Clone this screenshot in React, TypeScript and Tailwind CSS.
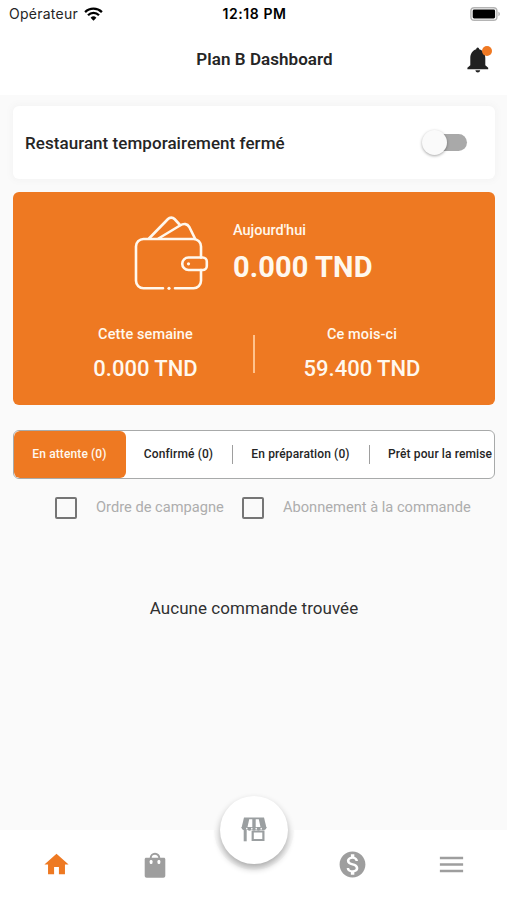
import React from "react";
import { MdHome, MdMonetizationOn, MdMenu } from "react-icons/md";

function WifiIcon() {
  return (
    <svg width="19" height="14" viewBox="0 0 19 14" fill="none" stroke="#000" strokeWidth="2.3">
      <path d="M1.1 5.1a12 12 0 0 1 16.8 0" />
      <path d="M4 8.2a7.8 7.8 0 0 1 11 0" />
      <path d="M9.5 13.7 6.6 10.8a4.1 4.1 0 0 1 5.8 0z" fill="#000" stroke="none" />
    </svg>
  );
}

function BatteryIcon() {
  return (
    <svg width="30" height="14" viewBox="0 0 30 14">
      <rect x="0.9" y="0.7" width="26" height="12.6" rx="3.4" fill="#fff" stroke="#b4b4b4" strokeWidth="1.4" />
      <rect x="2.7" y="2.5" width="22.4" height="9" rx="1.4" fill="#000" />
      <path d="M28.4 4.8c2 .7 2 3.7 0 4.4z" fill="#b4b4b4" />
    </svg>
  );
}

function BellIcon() {
  return (
    <svg width="22" height="26" viewBox="0 0 22 26" fill="#212121">
      <path d="M10.7 0.500c-.9 0-1.300.7-1.500 1.800C5.500 3.500 3.300 6.800 3.300 11v7.300L.4 20.800v1.400h20.800v-1.400l-2.900-2.500V11c0-4.200-2.200-7.500-6.100-8.700-.2-1.100-.6-1.800-1.500-1.800z" />
      <path d="M8.400 23.300h4.800c-.3 1.500-1.200 2.200-2.400 2.200s-2.100-.7-2.400-2.200z" />
    </svg>
  );
}

function WalletIcon() {
  return (
    <svg width="76" height="76" viewBox="0 0 76 76" fill="none" stroke="#fff8ee" strokeWidth="2.600" strokeLinecap="round" strokeLinejoin="round">
      <path d="M29 73.300H9.500a7.500 7.500 0 0 1-7.500-7.500V31.500A7.500 7.500 0 0 1 9.500 24h50a7.500 7.500 0 0 1 7.500 7.500v11" />
      <path d="M67 55v10.800a7.500 7.500 0 0 1-7.500 7.500H41" />
      <path d="M15 23.500 34 4a4.500 4.500 0 0 1 6.500 0L46 10" />
      <path d="M24.500 23.500 46 10.500c3.800-2.300 7.300-1.900 9.300 1.500L61 23.500" />
      <path d="M54.500 42.500h14.300a4 4 0 0 1 4 4v4.500a4 4 0 0 1-4 4H54.500a6.250 6.250 0 0 1 0-12.500z" />
      <circle cx="54.500" cy="48.800" r="1.600" fill="#fff8ee" stroke="none" />
      <circle cx="35" cy="73.300" r="1.600" fill="#fff8ee" stroke="none" />
    </svg>
  );
}

function StoreIcon() {
  return (
    <svg width="26" height="25" viewBox="0 0 26 25">
      <path d="M3 .5h20l2.500 10.500H.5z" fill="#9b9fa1" />
      <path d="M8.200 2.300h3.100V10H6.500zM14.700 2.300h3.100l1.700 7.700h-4.800z" fill="#fff" />
      <path d="M.5 10h25c.2 3.500-4.300 4-5.400 2.300-1.100 1.800-4.400 1.800-5 0-.8 1.800-3.400 1.800-4.200 0-.8 1.800-4 1.800-5 0C4.500 14 .3 13.500.5 10z" fill="#9b9fa1" />
      <path d="M4.200 12v12.300" fill="none" stroke="#9b9fa1" strokeWidth="3" />
      <path d="M11.700 14.500h10.700v8.500H11.700z" fill="none" stroke="#9b9fa1" strokeWidth="2.200" />
      <g fill="#fff">
        <circle cx="5.800" cy="11.600" r=".8" />
        <circle cx="10.800" cy="11.600" r=".8" />
        <circle cx="15.200" cy="11.600" r=".8" />
        <circle cx="20.200" cy="11.600" r=".8" />
      </g>
    </svg>
  );
}

function BagIcon() {
  return (
    <svg width="22" height="26" viewBox="0 0 22 26">
      <path d="M6.700 7.500V6a4.300 4.300 0 0 1 8.600 0v1.500" fill="none" stroke="#9e9e9e" strokeWidth="2" />
      <path d="M2.300 5.700h17.400c1.100 0 1.600.6 1.600 1.600v16.400c0 1.300-.8 2-2 2H2.700c-1.200 0-2-.7-2-2V7.300c0-1 .5-1.600 1.600-1.600z" fill="#9e9e9e" />
      <rect x="5.700" y="8" width="2.800" height="4" rx="1.200" fill="#fff" />
      <rect x="13.500" y="8" width="2.800" height="4" rx="1.200" fill="#fff" />
    </svg>
  );
}

function Checkbox() {
  return <span className="h-[22px] w-[22px] shrink-0 rounded-[2px] border-2 border-[#757575]" />;
}

export default function App() {
  return (
    <div className="flex h-[900px] w-[507px] flex-col overflow-hidden bg-[#fafafa] font-['Roboto',sans-serif] text-[#252525]">
      <header className="h-[95px] shrink-0 bg-white">
        <div className="grid h-[27px] grid-cols-3 items-center pl-[9px] pr-[7px] text-black">
          <div className="flex items-center gap-[6px] font-['Inter',sans-serif] text-[14px] tracking-[0.25px] text-[#252525]">
            <span>Opérateur</span>
            <WifiIcon />
          </div>
          <span className="text-center font-['Inter',sans-serif] text-[14px] font-semibold leading-5 tracking-[0.55px]">12:18 PM</span>
          <div className="flex justify-end"><BatteryIcon /></div>
        </div>
        <div className="grid h-[66px] grid-cols-[40px_1fr_40px] items-center pl-[18px] pr-[9px]">
          <span />
          <h1 className="pl-[13px] text-center text-[17px] font-semibold tracking-[0.06px]">Plan B Dashboard</h1>
          <div className="relative flex justify-center pr-px">
            <BellIcon />
            <span className="absolute -top-px right-[6px] h-[10px] w-[10px] rounded-full bg-[#ef7822]" />
          </div>
        </div>
      </header>

      <main className="flex grow flex-col pl-[13px] pr-[12px] pt-[11px]">
        <section className="flex h-[73px] items-center justify-between rounded-[6px] bg-white pl-[12px] pr-[28px] shadow-[0_0_6px_2px_#f4f4f4]">
          <span className="pt-[2px] text-[17px] font-medium tracking-[0.05px]">Restaurant temporairement fermé</span>
          <span className="relative flex h-[17px] w-[41px] items-center rounded-full bg-[#a9a9a9]">
            <span className="absolute -left-[4px] h-[25px] w-[25px] rounded-full bg-[#fafafa] shadow-[0_1px_3px_rgba(0,0,0,0.35)]" />
          </span>
        </section>

        <section className="mt-[13px] flex h-[213px] flex-col rounded-[6px] bg-[#ee7922] text-[#fff8ee]">
          <div className="flex items-center gap-[23px] pl-[121px] pt-[23px]">
            <WalletIcon />
            <div className="flex flex-col">
              <span className="text-[14.500px] font-medium leading-5">Aujourd'hui</span>
              <span className="mt-[8px] pb-px text-[29px] font-bold leading-9 tracking-[0.1px]">0.000 TND</span>
            </div>
          </div>
          <div className="mt-[34px] flex items-center">
            <div className="flex w-[240px] flex-col items-center pl-[25px]">
              <span className="text-[14.500px] font-medium leading-5 tracking-[0.1px]">Cette semaine</span>
              <span className="mt-[10px] text-[22px] font-medium leading-7">0.000 TND</span>
            </div>
            <span className="h-[38px] w-[2px] bg-[#ffc28c]" />
            <div className="flex w-[240px] flex-col items-center pr-[26px]">
              <span className="text-[14.500px] font-medium leading-5 tracking-[0.1px]">Ce mois-ci</span>
              <span className="mt-[10px] text-[22px] font-medium leading-7">59.400 TND</span>
            </div>
          </div>
        </section>

        <nav className="mt-[25px] flex h-[49px] shrink-0 items-center overflow-hidden whitespace-nowrap rounded-[6px] border border-[#a8aaaa] bg-white pb-px text-[12px] font-medium">
          <span className="mt-px flex h-[47px] w-[112px] shrink-0 items-center justify-center rounded-[6px] bg-[#ee7922] pb-px pr-px tracking-[0.12px] text-[#fff8ee]">En attente (0)</span>
          <span className="flex w-[106px] shrink-0 justify-center pb-px pr-px tracking-[0.12px]">Confirmé (0)</span>
          <span className="h-[19px] w-px shrink-0 bg-[#9e9e9e]" />
          <span className="flex w-[136px] shrink-0 justify-center pb-px pr-px tracking-[0.12px]">En préparation (0)</span>
          <span className="h-[19px] w-px shrink-0 bg-[#9e9e9e]" />
          <span className="shrink-0 pb-px pl-[18px] tracking-[0.12px]">Prêt pour la remise</span>
        </nav>

        <div className="mt-[18px] flex items-center pl-[42px] text-[14.650px] text-[#adadad]">
          <Checkbox />
          <span className="ml-[19px] w-[146px]">Ordre de campagne</span>
          <Checkbox />
          <span className="ml-[19px]">Abonnement à la commande</span>
        </div>
        <p className="mt-[75px] text-center text-[17px] leading-7 tracking-[0.04px] text-[#303030]">Aucune commande trouvée</p>
      </main>

      <footer className="relative grid h-[70px] shrink-0 grid-cols-5 items-center justify-items-center bg-white px-[7px] pb-px text-[#9e9e9e]">
        <span className="pl-px"><MdHome size={29} color="#ee7922" /></span>
        <BagIcon />
        <span className="absolute -top-[40px] left-[214px] h-[80px] w-[80px] rounded-full bg-[#fafafa] [clip-path:inset(40px_0_0_0)]" />
        <span className="absolute -top-[34px] left-[220px] flex h-[68px] w-[68px] items-center justify-center rounded-full bg-white pb-[2px] shadow-[0_4px_7px_rgba(0,0,0,0.32)]">
          <StoreIcon />
        </span>
        <span />
        <MdMonetizationOn size={31} />
        <span className="pl-px"><MdMenu size={31} /></span>
      </footer>
    </div>
  );
}
